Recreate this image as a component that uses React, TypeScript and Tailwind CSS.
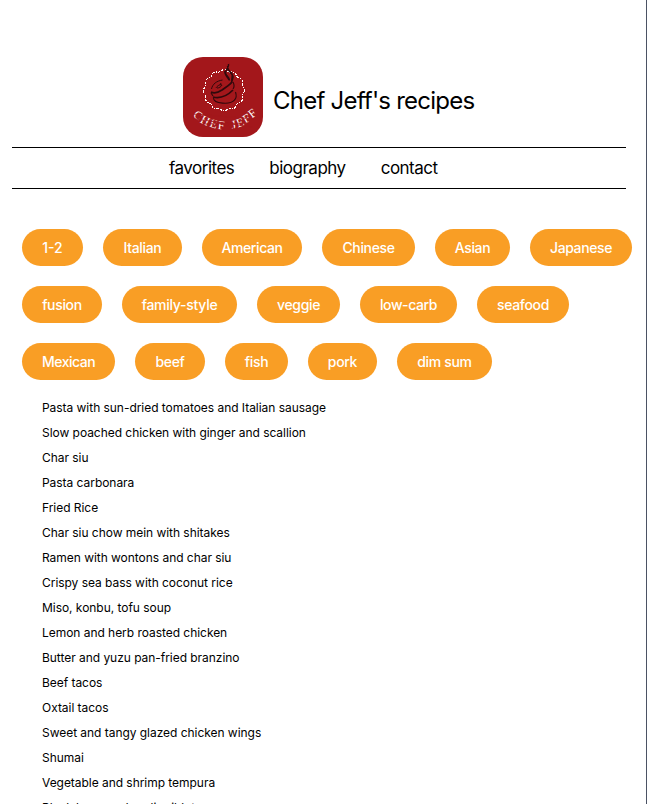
const tags = [
  [
    { name: '1-2', size: 'w-[61px] tracking-[0px]' },
    { name: 'Italian', size: 'w-[79px] tracking-[-0.33px]' },
    { name: 'American', size: 'w-[100px] tracking-[-0.4px]' },
    { name: 'Chinese', size: 'w-[93px] tracking-[-0.36px]' },
    { name: 'Asian', size: 'w-[75px] tracking-[-0.4px]' },
    { name: 'Japanese', size: 'w-[102px] tracking-[-0.4px]' },
  ],
  [
    { name: 'fusion', size: 'w-[80px] tracking-[-0.33px]' },
    { name: 'family-style', size: 'w-[115px] tracking-[-0.28px]' },
    { name: 'veggie', size: 'w-[83px] tracking-[-0.33px]' },
    { name: 'low-carb', size: 'w-[97px] tracking-[-0.4px]' },
    { name: 'seafood', size: 'w-[92px] tracking-[-0.33px]' },
  ],
  [
    { name: 'Mexican', size: 'w-[93px] tracking-[-0.5px]' },
    { name: 'beef', size: 'w-[70px] tracking-[-0.33px]' },
    { name: 'fish', size: 'w-[63px] tracking-[-0.33px]' },
    { name: 'pork', size: 'w-[69px] tracking-[-0.33px]' },
    { name: 'dim sum', size: 'w-[95px] tracking-[-0.33px]' },
  ],
];

const recipes = [
  'Pasta with sun-dried tomatoes and Italian sausage',
  'Slow poached chicken with ginger and scallion',
  'Char siu',
  'Pasta carbonara',
  'Fried Rice',
  'Char siu chow mein with shitakes',
  'Ramen with wontons and char siu',
  'Crispy sea bass with coconut rice',
  'Miso, konbu, tofu soup',
  'Lemon and herb roasted chicken',
  'Butter and yuzu pan-fried branzino',
  'Beef tacos',
  'Oxtail tacos',
  'Sweet and tangy glazed chicken wings',
  'Shumai',
  'Vegetable and shrimp tempura',
  'Black bean and garlic riblets',
];

// Scalloped ring around the pot
const ring = Array.from({ length: 97 }, (_, i) => {
  const a = (i / 96) * Math.PI * 2;
  const r = 19.8 + Math.cos(a * 12) * 0.9;
  return `${(41 + r * Math.cos(a)).toFixed(2)},${(33.3 + r * Math.sin(a)).toFixed(2)}`;
}).join(' ');

function Logo() {
  return (
    <svg width="80" height="80" viewBox="0 0 80 80" className="shrink-0 rounded-[20px] bg-[#a3171b]">
      <polyline points={ring} fill="none" stroke="#fff" strokeWidth="1.1" strokeDasharray="3 1.2 1 1.4 2 1" shapeRendering="crispEdges" />
      <g fill="none" stroke="#30090c" strokeWidth="1.2">
        <path d="M45.5 7c1 4-3.500 6-3 9 .5 3 4 4 4 7.500M44.500 9c0 5 3 6 5 9s-1 5-1 8M42 14c-1 4 3 6 4 9M48 15c3 4 0 6 1 9" strokeWidth="1.5" />
        <path d="M28.500 32c1-5 5-8 11-9M33 31c1-2 4-4 6-3-1 2-3 3-5 3M38 26l-1 2" strokeWidth="1" />
        <path d="M28 35c4 2 8 0 11-2 4-3 8-5 10-8" strokeWidth="1.7" />
        <path d="M30 40c8 2 14-1 20-7" strokeWidth="1.7" />
        <path d="M50 25c1.500 3 1.500 5 0 7M28 36l2 3M30.500 41c0 6 17 7 21 2 2-2 2-5 1-8" strokeWidth="1.1" />
      </g>
      <g fill="#fff" fontFamily="Liberation Serif, Times New Roman, serif" fontSize="12">
        <text transform="translate(9.5 59) rotate(38)">C</text>
        <text transform="translate(16.500 65) rotate(28)">H</text>
        <text transform="translate(26 69.500) rotate(17)">E</text>
        <text transform="translate(34.500 72) rotate(5)">F</text>
        <text transform="translate(49 72) rotate(-10)">J</text>
        <text transform="translate(55 70.500) rotate(-20)">E</text>
        <text transform="translate(62.500 66.500) rotate(-29)">F</text>
        <text transform="translate(69 61.500) rotate(-38)">F</text>
      </g>
      <path d="M10 57l62 5M12 62l58 8M20 67l45-1M28 62l26 11" stroke="#a3171b" strokeWidth="0.9" />
    </svg>
  );
}

export default function App() {
  return (
    <div className="h-[804px] w-[647px] overflow-hidden border-r border-[#4b5264] bg-white font-['Inter',sans-serif] text-black">
      <header className="ml-3 w-[614px] pt-[57px]">
        <div className="ml-[171px] flex h-20 items-center gap-[10px]">
          <Logo />
          <h1 className="mt-[7px] whitespace-nowrap text-[24px] leading-[30px] tracking-[-0.77px]">Chef Jeff's recipes</h1>
        </div>
        <nav className="mt-[10px] flex h-[42px] items-center gap-[35px] border-y border-black pt-[2px] pl-[157px] text-[17px] tracking-[-0.5px]">
          <a>favorites</a>
          <a>biography</a>
          <a>contact</a>
        </nav>
      </header>
      <section className="mt-10 ml-[22px] flex flex-col gap-5">
        {tags.map((row, i) => (
          <div key={i} className="flex gap-5">
            {row.map((tag) => (
              <button key={tag.name} className={`h-[37px] shrink-0 whitespace-nowrap rounded-[20px] bg-[#f99e25] text-center text-[14px] font-medium text-white ${tag.size}`}>
                {tag.name}
              </button>
            ))}
          </div>
        ))}
      </section>
      <ul className="mt-[15px] ml-[42px] text-[12px] leading-[25px] tracking-[-0.04px]">
        {recipes.map((recipe) => (
          <li key={recipe} className="whitespace-nowrap">{recipe}</li>
        ))}
      </ul>
    </div>
  );
}
